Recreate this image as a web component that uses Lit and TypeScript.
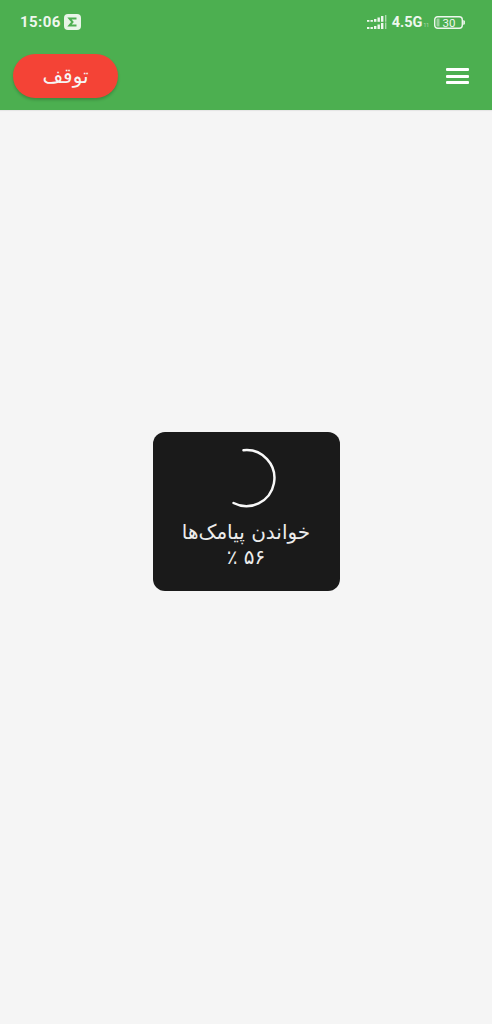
import { LitElement, html, css } from "lit";
import { customElement } from "lit/decorators.js";

@customElement("app-root")
export class AppRoot extends LitElement {
  static styles = css`
    :host { display: block; min-height: 100vh; background: #f5f5f5; font-family: "DejaVu Sans", "Noto Sans", sans-serif; }
    .header { background: #4caf50; height: 110px; display: flex; flex-direction: column; box-shadow: 0 1px 1px rgba(0,0,0,.06); }
    .status { height: 44px; padding: 0 27px 0 20px; display: flex; align-items: center; justify-content: space-between; color: #eef7ee; box-sizing: border-box; }
    .group { display: flex; align-items: center; }
    .time { font: 700 15px "Roboto", sans-serif; letter-spacing: .4px; margin-right: 3px; }
    .sigma { width: 17px; height: 16px; display: block; }
    .net { font: 700 14.500px "Roboto", sans-serif; margin: 0 1px 0 5px; }
    .tiny { font: 400 5px "Roboto", sans-serif; margin: 5px 5px 0 0; opacity: .6; }
    .battery { display: block; }
    .bar { flex: 1; display: flex; align-items: center; justify-content: space-between; padding: 0 23px 2px 13px; }
    .stop { width: 105px; height: 44px; border: 0; border-radius: 22px; background: #f44336; color: #f6f6f6; font: 400 20px "DejaVu Sans", sans-serif; padding: 0; box-shadow: 0 2px 3px rgba(0,0,0,.2); }
    .menu { width: 23px; height: 16px; display: flex; flex-direction: column; justify-content: space-between; }
    .menu i { display: block; height: 3px; background: #fff; border-radius: 1px; }
    .overlay { position: fixed; inset: 0 0 1px 0; display: flex; align-items: center; justify-content: center; }
    .dialog { width: 187px; height: 159px; box-sizing: border-box; padding-top: 16px; border-radius: 12px; background: #1a1a1a; color: #ececec; display: flex; flex-direction: column; align-items: center; text-align: center; }
    .spinner { display: block; }
    .msg { font-size: 20px; line-height: 25px; margin-top: 12px; white-space: nowrap; }
  `;

  render() {
    return html`
      <div class="header">
        <div class="status">
          <div class="group">
            <span class="time">15:06</span>
            <svg class="sigma" viewBox="0 0 17 16"><rect width="17" height="16" rx="4" fill="#e8f5e8"/><path d="M12.500 4.500H5.500l3 3.500-3 3.500h7" fill="none" stroke="#4caf50" stroke-width="2"/></svg>
          </div>
          <div class="group">
            <svg width="20" height="15" viewBox="0 0 20 15" fill="#eef7ee">
              <rect x="0" y="5" width="2.400" height="1.800"/><rect x="3.500" y="5" width="2.400" height="1.800"/><rect x="7" y="4" width="2.400" height="2.800"/><rect x="10.500" y="2.500" width="2.400" height="4.300"/><rect x="14" y="1" width="2.400" height="5.800"/><rect x="18" y="0" width="1.400" height="6.800" opacity=".6"/>
              <rect x="0" y="12" width="2.400" height="2"/><rect x="3.500" y="12" width="2.400" height="2"/><rect x="7" y="11" width="2.400" height="3"/><rect x="10.500" y="9.500" width="2.400" height="4.500"/><rect x="14" y="8" width="2.400" height="6"/><rect x="18" y="7.500" width="1.400" height="6.500" opacity=".6"/>
            </svg>
            <span class="net">4.5G</span>
            <span class="tiny">11</span>
            <svg class="battery" width="31" height="13" viewBox="0 0 31 13">
              <rect x=".7" y=".7" width="27.600" height="11.600" rx="3" fill="none" stroke="#eef7ee" stroke-width="1.400"/>
              <rect x="2.500" y="2.500" width="3" height="8" fill="#eef7ee" opacity=".5"/>
              <path d="M29.800 4.500c1 .3 1 3.700 0 4z" fill="#eef7ee" stroke="#eef7ee"/>
              <text x="15" y="10.500" text-anchor="middle" font-family="Roboto, sans-serif" font-size="11.500" fill="#eef7ee">30</text>
            </svg>
          </div>
        </div>
        <div class="bar">
          <button class="stop" dir="rtl">توقف</button>
          <div class="menu"><i></i><i></i><i></i></div>
        </div>
      </div>
      <div class="overlay">
        <div class="dialog">
          <svg class="spinner" width="60" height="60" viewBox="0 0 60 60">
            <path d="M27.500 2.300A28 28 0 1 1 17.500 55" fill="none" stroke="#f8f8f8" stroke-width="2.500" stroke-linecap="round"/>
          </svg>
          <div class="msg" dir="rtl">خواندن پیامک‌ها<br />۵۶ ٪</div>
        </div>
      </div>
    `;
  }
}
